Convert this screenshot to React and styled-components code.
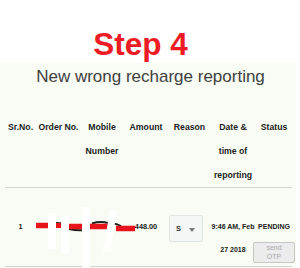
import styled, { createGlobalStyle } from "styled-components";

const GlobalStyle = createGlobalStyle`
  body {
    margin: 0;
    background: #ffffff;
    font-family: "Liberation Sans", Arial, sans-serif;
  }
`;

const columns = [31, 45, 42, 46, 41, 46, 36];

export default function App() {
  return (
    <Page>
      <GlobalStyle />
      <StepHeading>Step 4</StepHeading>
      <Panel>
        <Title>New wrong recharge reporting</Title>
        <Table>
          <colgroup>
            {columns.map((w, i) => (
              <col key={i} style={{ width: w }} />
            ))}
          </colgroup>
          <thead>
            <tr>
              <Th>Sr.No.</Th>
              <Th>Order No.</Th>
              <Th>Mobile Number</Th>
              <Th>Amount</Th>
              <Th>Reason</Th>
              <Th>Date &amp; time of reporting</Th>
              <Th>Status</Th>
            </tr>
          </thead>
          <tbody>
            <tr>
              <Td $light>1</Td>
              <Td />
              <Td />
              <Td $light>448.00</Td>
              <Td $left>
                <SelectBox>
                  <span>S</span>
                  <Caret />
                </SelectBox>
              </Td>
              <Td>9:46 AM, Feb 27 2018</Td>
              <Td>
                <StatusCell>
                  PENDING
                  <OtpButton disabled>
                    send
                    <br />
                    OTP
                  </OtpButton>
                </StatusCell>
              </Td>
            </tr>
          </tbody>
        </Table>
      </Panel>
      <Redaction viewBox="0 0 300 268" width="300" height="268">
        <path d="M36 225.5 H50" stroke="#e8141c" strokeWidth="5.5" />
        <path d="M53 223.5 Q58 222 63 224" stroke="#2a2a2a" strokeWidth="1.6" fill="none" />
        <path d="M55 225.5 H63" stroke="#e8141c" strokeWidth="5" />
        <path d="M69 229 Q77 231 86 230" stroke="#1e1e1e" strokeWidth="2" fill="none" />
        <path d="M68 226.5 H87" stroke="#e8141c" strokeWidth="5.5" />
        <path d="M92 223.5 Q100 221 108 223" stroke="#1e1e1e" strokeWidth="2" fill="none" />
        <path d="M90 226.5 H108" stroke="#e8141c" strokeWidth="5.5" />
        <path d="M110 223.5 Q116 223 121 226" stroke="#1e1e1e" strokeWidth="2" fill="none" />
        <path d="M116 228.5 H135" stroke="#e8141c" strokeWidth="5.5" />
        <rect x="48" y="213" width="8" height="36" fill="#ffffff" />
        <rect x="61" y="216" width="8" height="37" fill="#ffffff" />
        <rect x="82" y="207" width="8" height="61" fill="#ffffff" />
        <polygon points="110,210 117,211 110,252 103,251" fill="#ffffff" />
      </Redaction>
    </Page>
  );
}

const Page = styled.div`
  position: relative;
  width: 300px;
  height: 268px;
  overflow: hidden;
`;

const StepHeading = styled.h1`
  margin: 0;
  padding: 26px 19px 0 0;
  height: 37px;
  text-align: center;
  font-family: "Liberation Sans", Arial, sans-serif;
  font-weight: 700;
  font-size: 31.5px;
  line-height: 36px;
  color: #ec1b24;
`;

const Panel = styled.section`
  margin-right: 4px;
  padding: 3px 0 0 5px;
  height: 202px;
  background: #f8fcf4;
`;

const Title = styled.h2`
  margin: 0;
  text-align: center;
  font-weight: 400;
  font-size: 17px;
  line-height: 22px;
  color: #404040;
`;

const Table = styled.table`
  width: 287px;
  border-collapse: collapse;
  table-layout: fixed;
`;

const Th = styled.th`
  padding: 27px 0 0;
  vertical-align: top;
  text-align: center;
  font-weight: 700;
  font-size: 8.7px;
  line-height: 24px;
  color: #222;
  border-bottom: 1px solid #d2d6d2;
`;

const Td = styled.td`
  padding: 27px 0 3px;
  vertical-align: top;
  text-align: ${(p) => (p.$left ? "left" : "center")};
  font-weight: ${(p) => (p.$light ? 600 : 700)};
  font-size: ${(p) => (p.$light ? "7.3px" : "7px")};
  line-height: 23px;
  color: #222;
  border-bottom: 1px solid #d2d6d2;
`;

const SelectBox = styled.div`
  box-sizing: border-box;
  display: flex;
  align-items: center;
  gap: 8px;
  width: 34px;
  height: 27px;
  padding-left: 6px;
  background: #f3f8f7;
  border: 1px solid #dfe5e3;
  border-radius: 2px;
  font-size: 7.5px;
  color: #333;
`;

const Caret = styled.span`
  width: 0;
  height: 0;
  margin-top: 2px;
  border-left: 3.5px solid transparent;
  border-right: 3.5px solid transparent;
  border-top: 4px solid #777;
`;

const StatusCell = styled.div`
  display: flex;
  flex-direction: column;
  align-items: center;
`;

const OtpButton = styled.button`
  box-sizing: border-box;
  flex-shrink: 0;
  width: 42px;
  height: 21px;
  margin-top: 4px;
  padding: 0;
  background: #ececec;
  border: 1px solid #c6c6c6;
  border-radius: 2px;
  font-family: "Liberation Sans", Arial, sans-serif;
  font-size: 7px;
  line-height: 8.5px;
  color: #a9a9a9;
`;

const Redaction = styled.svg`
  position: absolute;
  top: 0;
  left: 0;
  pointer-events: none;
`;
